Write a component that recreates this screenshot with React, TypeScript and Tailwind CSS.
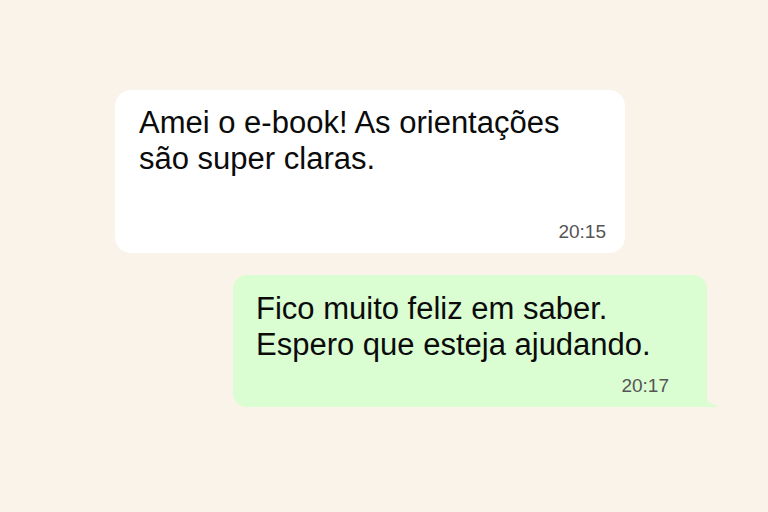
export default function App() {
  return (
    <div className="w-[768px] h-[512px] bg-[#faf3e9] relative overflow-hidden font-['Liberation_Sans',Arial,sans-serif]">
      <div className="pt-[90px] pl-[115px]">
        <div className="w-[510px] h-[163px] bg-white rounded-[16px] pl-[24px] pr-[19px] pt-[15px] flex flex-col">
          <p className="text-[31px] leading-[36px] text-[#0b0b0b]">
            Amei o e-book! As orientações
            <br />
            são super claras.
          </p>
          <div className="mt-auto mb-[10px] self-end text-[19px] leading-[22px] text-[#555]">20:15</div>
        </div>
      </div>
      <div className="pt-[22px] pl-[233px]">
        <div className="relative w-[474px] h-[132px] bg-[#dafdd2] rounded-[14px] rounded-br-none pl-[23px] pr-[38px] pt-[16px] flex flex-col">
          <p className="text-[31px] leading-[36px] text-[#0b0b0b]">
            Fico muito feliz em saber.
            <br />
            Espero que esteja ajudando.
          </p>
          <div className="mt-auto mb-[10px] self-end text-[19px] leading-[22px] text-[#555]">20:17</div>
          <svg className="absolute right-[-11px] bottom-0" width="12" height="12" viewBox="0 0 12 12">
            <path d="M0 0 C0 6 4 9 11 10.5 C12 11 11.5 12 10 12 L0 12 Z" fill="#dafdd2" />
          </svg>
        </div>
      </div>
    </div>
  );
}
